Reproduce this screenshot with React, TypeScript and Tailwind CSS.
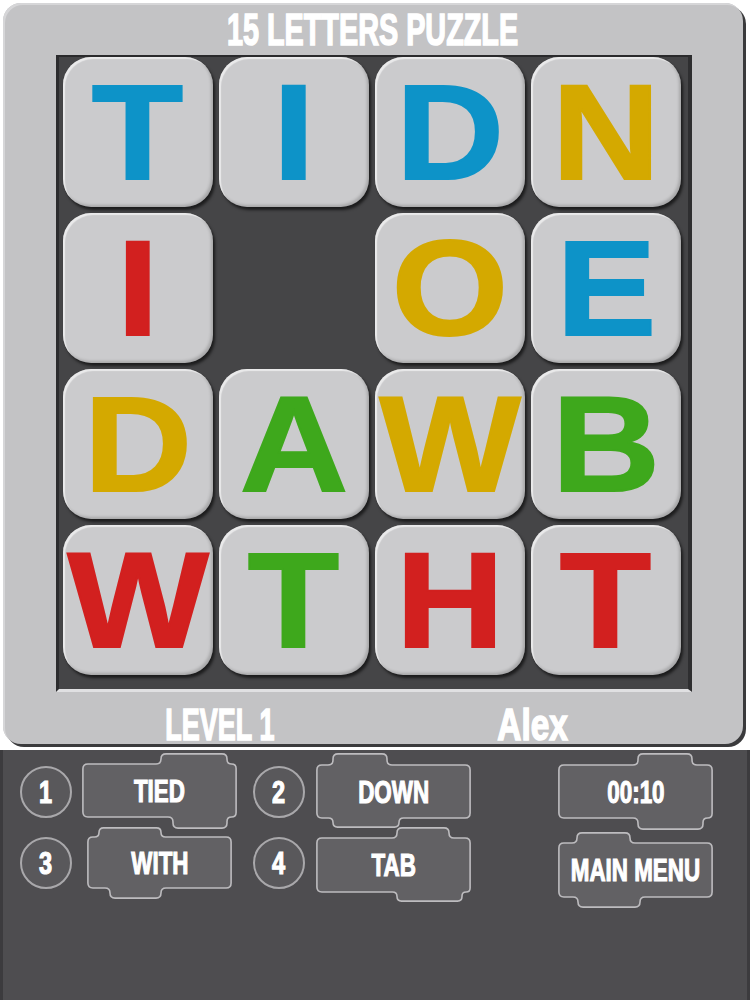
import React from "react";

type Pt = [number, number];

function roundedPath(pts: Pt[], r: number): string {
  const n = pts.length;
  let d = "";
  for (let i = 0; i < n; i++) {
    const P = pts[i];
    const A = pts[(i - 1 + n) % n];
    const B = pts[(i + 1) % n];
    const inX = P[0] - A[0];
    const inY = P[1] - A[1];
    const inL = Math.hypot(inX, inY) || 1;
    const outX = B[0] - P[0];
    const outY = B[1] - P[1];
    const outL = Math.hypot(outX, outY) || 1;
    const rr = Math.min(r, inL / 2, outL / 2);
    const p1: Pt = [P[0] - (inX / inL) * rr, P[1] - (inY / inL) * rr];
    const p2: Pt = [P[0] + (outX / outL) * rr, P[1] + (outY / outL) * rr];
    d += `${i === 0 ? "M" : "L"}${p1[0].toFixed(2)} ${p1[1].toFixed(2)} Q${P[0]} ${P[1]} ${p2[0].toFixed(2)} ${p2[1].toFixed(2)} `;
  }
  return d + "Z";
}

type BtnSpec = {
  label: string;
  w: number;
  h: number;
  mt: number;
  mb: number;
  t1: number;
  t2: number;
  b1: number;
  b2: number;
};

function PuzzleButton({ spec, className }: { spec: BtnSpec; className?: string }) {
  const { w, h, mt, mb, t1, t2, b1, b2 } = spec;
  const s = 0.9;
  const pts: Pt[] = [
    [t1, s],
    [t2, s],
    [t2, mt],
    [w - s, mt],
    [w - s, mb],
    [b2, mb],
    [b2, h - s],
    [b1, h - s],
    [b1, mb],
    [s, mb],
    [s, mt],
    [t1, mt],
  ];
  return (
    <div className={`relative shrink-0 ${className ?? ""}`} style={{ width: w, height: h }}>
      <svg className="absolute inset-0" width={w} height={h} viewBox={`0 0 ${w} ${h}`}>
        <path d={roundedPath(pts, 5)} fill="#626164" stroke="#bdbcbf" strokeWidth={1.6} />
      </svg>
      <div
        className="absolute left-0 right-0 flex items-center justify-center"
        style={{ top: mt, height: mb - mt }}
      >
        <span className="inline-block scale-x-[0.7] whitespace-nowrap font-['Liberation_Sans',Arial,sans-serif] text-[32px] font-bold leading-none text-white [-webkit-text-stroke:1.2px_#ffffff]">
          {spec.label}
        </span>
      </div>
    </div>
  );
}

function Circle({ n, className }: { n: string; className?: string }) {
  return (
    <div
      className={`flex h-[52px] w-[52px] items-center justify-center rounded-full border-2 border-[#a9a8ab] bg-[#59585b] ${className ?? ""}`}
    >
      <span className="inline-block scale-x-[0.76] font-['Liberation_Sans',Arial,sans-serif] text-[31px] font-bold leading-none text-white [-webkit-text-stroke:1.2px_#ffffff]">
        {n}
      </span>
    </div>
  );
}

const tiles: { ch: string; color: string }[] = [
  { ch: "T", color: "text-[#0d93c8]" },
  { ch: "I", color: "text-[#0d93c8]" },
  { ch: "D", color: "text-[#0d93c8]" },
  { ch: "N", color: "text-[#d4a900]" },
  { ch: "I", color: "text-[#d2201f]" },
  { ch: "", color: "" },
  { ch: "O", color: "text-[#d4a900]" },
  { ch: "E", color: "text-[#0d93c8]" },
  { ch: "D", color: "text-[#d4a900]" },
  { ch: "A", color: "text-[#3ea81c]" },
  { ch: "W", color: "text-[#d4a900]" },
  { ch: "B", color: "text-[#3ea81c]" },
  { ch: "W", color: "text-[#d2201f]" },
  { ch: "T", color: "text-[#3ea81c]" },
  { ch: "H", color: "text-[#d2201f]" },
  { ch: "T", color: "text-[#d2201f]" },
];

const TIED: BtnSpec = { label: "TIED", w: 155, h: 76, mt: 11, mb: 64, t1: 79, t2: 145, b1: 91, b2: 145 };
const WITH: BtnSpec = { label: "WITH", w: 145, h: 72, mt: 10, mb: 61, t1: 12, t2: 74, b1: 23, b2: 74 };
const DOWN: BtnSpec = { label: "DOWN", w: 155, h: 75, mt: 12, mb: 65, t1: 17, t2: 71, b1: 17, b2: 83 };
const TAB: BtnSpec = { label: "TAB", w: 155, h: 75, mt: 11, mb: 65, t1: 81, t2: 133, b1: 81, b2: 146 };
const TIME: BtnSpec = { label: "00:10", w: 155, h: 77, mt: 12, mb: 65, t1: 80, t2: 134, b1: 80, b2: 145 };
const MENU: BtnSpec = { label: "MAIN MENU", w: 155, h: 76, mt: 11, mb: 65, t1: 19, t2: 72, b1: 20, b2: 82 };

export default function App() {
  return (
    <div className="flex h-[1000px] w-[750px] flex-col overflow-hidden bg-white font-['Liberation_Sans',Arial,sans-serif]">
      {/* Frame */}
      <div className="ml-[3px] mt-[3px] flex h-[741px] w-[740px] shrink-0 flex-col rounded-[18px] bg-[#c3c3c5] shadow-[inset_2px_2px_0_#d6d6d8,3px_3px_0_#3a3a3c]">
        <div className="flex h-[52px] shrink-0 items-center justify-center">
          <span className="inline-block scale-x-[0.64] whitespace-nowrap text-[45px] font-bold leading-none text-white [-webkit-text-stroke:1.6px_#ffffff]">
            15 LETTERS PUZZLE
          </span>
        </div>
        <div className="ml-[53px] h-[637px] w-[636px] shrink-0 border-b-[3px] border-l-[3px] border-r-[4px] border-t-[2px] border-b-[#e0e0e2] border-l-[#2c2c2e] border-r-[#2e2e30] border-t-[#2a2a2c] bg-[#454547] pl-[4px]">
          <div className="grid grid-cols-[repeat(4,150px)] grid-rows-[repeat(4,150px)] gap-[6px]">
            {tiles.map((t, i) =>
              t.ch ? (
                <div
                  key={i}
                  className="flex items-center justify-center rounded-[28px] bg-[#cbcbcd] shadow-[inset_2px_2px_1px_rgba(255,255,255,0.6),inset_-2px_-2px_3px_rgba(0,0,0,0.18),2px_3px_3px_rgba(0,0,0,0.6)]"
                >
                  <span
                    className={`inline-block scale-x-[1.1] text-[136px] font-bold leading-none [-webkit-text-stroke:2px_currentColor] ${t.color}`}
                  >
                    {t.ch}
                  </span>
                </div>
              ) : (
                <div key={i} />
              )
            )}
          </div>
        </div>
        <div className="grid h-[52px] shrink-0 grid-cols-[434px_192px] items-center pt-[10px]">
          <div className="flex justify-center">
            <span className="inline-block scale-x-[0.6] whitespace-nowrap text-[45px] font-bold leading-none text-white [-webkit-text-stroke:1.6px_#ffffff]">
              LEVEL 1
            </span>
          </div>
          <div className="flex justify-center">
            <span className="inline-block scale-x-[0.74] whitespace-nowrap text-[45px] font-bold leading-none text-white [-webkit-text-stroke:1.6px_#ffffff]">
              Alex
            </span>
          </div>
        </div>
      </div>

      {/* Bottom panel */}
      <div className="mt-[6px] flex h-[250px] shrink-0 items-start border-l-[3px] border-r-[3px] border-l-[#3c3b3e] border-r-[#3c3b3e] bg-[#4e4d50] pt-[3px]">
        <div className="ml-[17px] flex w-[52px] shrink-0 flex-col">
          <Circle n="1" className="mt-[13px]" />
          <Circle n="3" className="mt-[19px]" />
        </div>
        <div className="ml-[10px] flex w-[155px] shrink-0 flex-col">
          <PuzzleButton spec={TIED} />
          <PuzzleButton spec={WITH} className="ml-[5px] mt-[-2px]" />
        </div>
        <div className="ml-[16px] flex w-[52px] shrink-0 flex-col">
          <Circle n="2" className="mt-[13px]" />
          <Circle n="4" className="mt-[19px]" />
        </div>
        <div className="ml-[11px] flex w-[155px] shrink-0 flex-col">
          <PuzzleButton spec={DOWN} />
          <PuzzleButton spec={TAB} className="mt-[-1px]" />
        </div>
        <div className="ml-[87px] flex w-[155px] shrink-0 flex-col">
          <PuzzleButton spec={TIME} />
          <PuzzleButton spec={MENU} className="mt-[2px]" />
        </div>
      </div>
    </div>
  );
}
